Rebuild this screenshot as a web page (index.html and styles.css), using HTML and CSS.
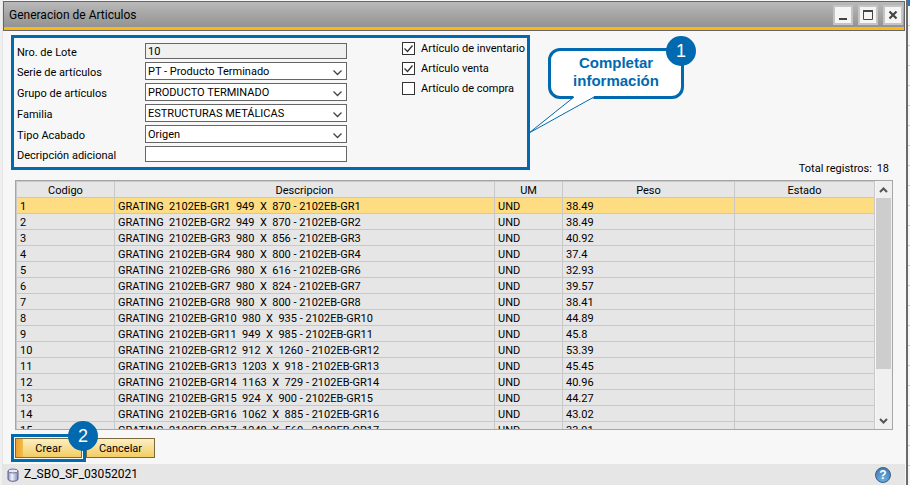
FILE: index.html
```
<!DOCTYPE html>
<html lang="es">
<head>
    <meta charset="UTF-8">
    <meta name="viewport" content="width=device-width, initial-scale=1.0">
    <title>Generacion de Articulos</title>
    <link rel="stylesheet" href="styles.css">
</head>
<body>
    <main class="window">
        <header class="titlebar">
            <h1>Generacion de Articulos</h1>
            <div class="window-buttons">
                <button type="button" aria-label="Minimizar">
                    <svg width="16" height="16" viewBox="0 0 16 16"><path d="M4 12H12" stroke="#444" stroke-width="2"/></svg>
                </button>
                <button type="button" aria-label="Maximizar">
                    <svg width="16" height="16" viewBox="0 0 16 16"><path d="M3.500 3V12.500H12.500V3" fill="none" stroke="#444"/><path d="M3 4H13" stroke="#444" stroke-width="2"/></svg>
                </button>
                <button type="button" aria-label="Cerrar">
                    <svg width="16" height="16" viewBox="0 0 16 16"><path d="M4.500 4.500L11.500 11.500M11.500 4.500L4.500 11.500" stroke="#444" stroke-width="2.200"/></svg>
                </button>
            </div>
        </header>

        <form class="content" onsubmit="event.preventDefault();">
            <section class="top">
                <div class="panel">
                    <div class="fields">
                        <label for="lote">Nro. de Lote</label>
                        <input type="text" id="lote" value="10" readonly>
                        <label for="serie">Serie de artículos</label>
                        <select id="serie"><option>PT - Producto Terminado</option></select>
                        <label for="grupo">Grupo de artículos</label>
                        <select id="grupo"><option>PRODUCTO TERMINADO</option></select>
                        <label for="familia">Familia</label>
                        <select id="familia"><option>ESTRUCTURAS METÁLICAS</option></select>
                        <label for="acabado">Tipo Acabado</label>
                        <select id="acabado"><option>Origen</option></select>
                        <label for="adicional">Decripción adicional</label>
                        <input type="text" id="adicional">
                    </div>
                    <div class="checks">
                        <label><input type="checkbox" checked> Artículo de inventario</label>
                        <label><input type="checkbox" checked> Artículo venta</label>
                        <label><input type="checkbox"> Artículo de compra</label>
                    </div>
                    <div class="callout">
                        Completar<br>información
                        <svg class="tail" width="72" height="42" viewBox="0 0 72 42">
                            <path d="M46 0H66V4L4 37L45 4Z" fill="#fff"/>
                            <path d="M46 3L1 39L66 3" fill="none" stroke="#0069af"/>
                        </svg>
                        <span class="badge">1</span>
                    </div>
                </div>
                <p class="total">Total registros: <span>18</span></p>
            </section>

            <div class="grid">
                <div class="rows">
                    <table>
                        <thead>
                            <tr><th class="codigo">Codigo</th><th>Descripcion</th><th class="um">UM</th><th class="peso">Peso</th><th class="estado">Estado</th></tr>
                        </thead>
                        <tbody>
                            <tr class="selected"><td>1</td><td>GRATING  2102EB-GR1  949  X  870 - 2102EB-GR1</td><td>UND</td><td>38.49</td><td></td></tr>
                            <tr><td>2</td><td>GRATING  2102EB-GR2  949  X  870 - 2102EB-GR2</td><td>UND</td><td>38.49</td><td></td></tr>
                            <tr><td>3</td><td>GRATING  2102EB-GR3  980  X  856 - 2102EB-GR3</td><td>UND</td><td>40.92</td><td></td></tr>
                            <tr><td>4</td><td>GRATING  2102EB-GR4  980  X  800 - 2102EB-GR4</td><td>UND</td><td>37.4</td><td></td></tr>
                            <tr><td>5</td><td>GRATING  2102EB-GR6  980  X  616 - 2102EB-GR6</td><td>UND</td><td>32.93</td><td></td></tr>
                            <tr><td>6</td><td>GRATING  2102EB-GR7  980  X  824 - 2102EB-GR7</td><td>UND</td><td>39.57</td><td></td></tr>
                            <tr><td>7</td><td>GRATING  2102EB-GR8  980  X  800 - 2102EB-GR8</td><td>UND</td><td>38.41</td><td></td></tr>
                            <tr><td>8</td><td>GRATING  2102EB-GR10  980  X  935 - 2102EB-GR10</td><td>UND</td><td>44.89</td><td></td></tr>
                            <tr><td>9</td><td>GRATING  2102EB-GR11  949  X  985 - 2102EB-GR11</td><td>UND</td><td>45.8</td><td></td></tr>
                            <tr><td>10</td><td>GRATING  2102EB-GR12  912  X  1260 - 2102EB-GR12</td><td>UND</td><td>53.39</td><td></td></tr>
                            <tr><td>11</td><td>GRATING  2102EB-GR13  1203  X  918 - 2102EB-GR13</td><td>UND</td><td>45.45</td><td></td></tr>
                            <tr><td>12</td><td>GRATING  2102EB-GR14  1163  X  729 - 2102EB-GR14</td><td>UND</td><td>40.96</td><td></td></tr>
                            <tr><td>13</td><td>GRATING  2102EB-GR15  924  X  900 - 2102EB-GR15</td><td>UND</td><td>44.27</td><td></td></tr>
                            <tr><td>14</td><td>GRATING  2102EB-GR16  1062  X  885 - 2102EB-GR16</td><td>UND</td><td>43.02</td><td></td></tr>
                            <tr><td>15</td><td>GRATING  2102EB-GR17  1240  X  560 - 2102EB-GR17</td><td>UND</td><td>33.91</td><td></td></tr>
                        </tbody>
                    </table>
                </div>
                <div class="scrollbar">
                    <svg width="15" height="17" viewBox="0 0 15 17"><path d="M4 11L7.500 7.500L11 11" fill="none" stroke="#555" stroke-width="2"/></svg>
                    <div class="thumb"></div>
                    <svg width="15" height="16" viewBox="0 0 15 16"><path d="M4 6L7.500 9.500L11 6" fill="none" stroke="#555" stroke-width="2"/></svg>
                </div>
            </div>

            <div class="actions">
                <div class="highlight">
                    <button type="submit" class="primary">Crear</button>
                    <span class="badge">2</span>
                </div>
                <button type="button">Cancelar</button>
            </div>
        </form>

        <footer class="statusbar">
            <svg width="12" height="14" viewBox="0 0 12 14">
                <defs><linearGradient id="db"><stop offset="0" stop-color="#8a8fc8"/><stop offset="0.400" stop-color="#f2f4ff"/><stop offset="1" stop-color="#7f84bd"/></linearGradient></defs>
                <path d="M1 3V11C1 14 11 14 11 11V3Z" fill="url(#db)" stroke="#5c5f80"/>
                <ellipse cx="6" cy="3" rx="5" ry="2" fill="#e4e6fa" stroke="#6d7090"/>
            </svg>
            <span>Z_SBO_SF_03052021</span>
            <button type="button" class="help" aria-label="Ayuda">?</button>
        </footer>
    </main>

    <!-- Window that shows behind this one -->
    <aside class="behind"></aside>
</body>
</html>
```
FILE: styles.css
```
* {
    margin: 0;
    padding: 0;
    box-sizing: border-box;
}

body {
    font-family: Tahoma, Roboto, sans-serif;
    font-size: 11px;
    line-height: 15px;
    color: #000;
    height: 100vh;
    display: flex;
    overflow: hidden;
    background: #f0f0f0;
}

button, input, select {
    font: inherit;
    color: inherit;
}

/* Window */
.window {
    flex: 1;
    display: flex;
    flex-direction: column;
    min-width: 0;
    margin-left: 2px;
    padding: 1px 1px 0 0;
    background: #f7f7f7;
    border-left: 1px solid #e4e4e4;
    border-right: 2px solid #6b6b6b;
}

.titlebar {
    display: flex;
    justify-content: space-between;
    align-items: center;
    height: 30px;
    padding: 0 1px 0 5px;
    border: 1px solid #666;
    background: linear-gradient(to bottom, #fcb813, #fcb813) no-repeat bottom / 100% 3px,
        linear-gradient(to bottom, #b9b9b9, #8e8e8e);
}

.titlebar h1 {
    font-size: 12px;
    font-weight: normal;
    padding-bottom: 2px;
}

.window-buttons {
    display: flex;
    gap: 5px;
    padding-bottom: 2px;
}

.window-buttons button {
    width: 20px;
    height: 20px;
    border: 2px solid #c4c4c4;
    background: #f5f5f5;
}

svg {
    display: block;
}

/* Form */
.content {
    flex: 1;
    display: flex;
    flex-direction: column;
    min-height: 0;
    padding: 4px 12px 2px 8px;
}

.top {
    display: flex;
    justify-content: space-between;
    align-items: flex-end;
    padding-bottom: 4px;
}

.panel {
    position: relative;
    display: flex;
    gap: 55px;
    width: 519px;
    height: 135px;
    margin-bottom: 6px;
    padding: 3px;
    border: 3px solid #0069af;
}

.fields {
    display: grid;
    grid-template-columns: 128px 202px;
    grid-auto-rows: 16px 18px 18px 18px 18px 16px;
    row-gap: 3px;
    align-items: center;
    padding-top: 2px;
}

.fields label {
    padding-top: 2px;
}

.fields input,
.fields select {
    width: 100%;
    height: 100%;
    padding: 0 2px;
    border: 1px solid #666;
    border-radius: 0;
    background: #fff;
}

.fields input[readonly] {
    background: #f0f0f0;
}

.fields select {
    appearance: none;
    background: #fff url("data:image/svg+xml,%3Csvg xmlns='http://www.w3.org/2000/svg' width='9' height='6'%3E%3Cpath d='M.5 .5L4.500 4.500L8.500 .5' fill='none' stroke='%23444' stroke-width='1.300'/%3E%3C/svg%3E") no-repeat right 4px top 7px;
}

.checks {
    display: flex;
    flex-direction: column;
    gap: 5px;
}

.checks label {
    display: flex;
    align-items: center;
    gap: 6px;
    white-space: nowrap;
}

.checks input {
    appearance: none;
    width: 13px;
    height: 13px;
    border: 1px solid #333;
    background: #fff;
}

.checks input:checked {
    background: #fff url("data:image/svg+xml,%3Csvg xmlns='http://www.w3.org/2000/svg' width='11' height='11'%3E%3Cpath d='M1.500 5.500L4.500 8.500L9.500 2.500' fill='none' stroke='%23333' stroke-width='1.300'/%3E%3C/svg%3E") no-repeat center;
}

/* Callouts */
.callout {
    position: absolute;
    left: 534px;
    top: 10px;
    width: 136px;
    height: 51px;
    padding-top: 3px;
    border: 3px solid #0069af;
    border-radius: 12px;
    background: #fff;
    color: #0069af;
    font: bold 15px/18px 'Liberation Sans', Arial, sans-serif;
    text-align: center;
}

.tail {
    position: absolute;
    left: -23px;
    top: 43px;
}

.badge {
    position: absolute;
    top: -15px;
    right: -15px;
    width: 30px;
    height: 30px;
    border-radius: 50%;
    background: #0069af;
    color: #fff;
    font: 18px/30px 'Liberation Sans', Arial, sans-serif;
    text-align: center;
}

.total {
    padding-right: 4px;
}

.total span {
    margin-left: 2px;
}

/* Grid */
.grid {
    flex: 1;
    display: flex;
    gap: 1px;
    min-height: 0;
    margin-left: 4px;
    border: 1px solid #a6a6a6;
}

.rows {
    flex: 1;
    overflow: hidden;
    border-left: 1px solid #c8c8c8;
}

table {
    width: 100%;
    table-layout: fixed;
    border-collapse: separate;
    border-spacing: 0;
    background: #e6e6e6;
}

th, td {
    height: 16px;
    padding: 2px 3px 0 3px;
    border-right: 1px solid #c8c8c8;
    border-bottom: 1px solid #c8c8c8;
    line-height: 13px;
    white-space: pre;
}

th {
    height: 17px;
    padding-top: 1px;
    border-top: 1px solid #c8c8c8;
    font-weight: normal;
}

.selected {
    background: #fddc82;
}

.codigo {
    width: 98px;
}

.um {
    width: 68px;
}

.peso {
    width: 172px;
}

.estado {
    width: 140px;
}

.scrollbar {
    display: flex;
    flex-direction: column;
    width: 16px;
    padding-right: 1px;
    background: #f0f0f0;
}

.thumb {
    height: 171px;
    margin-bottom: auto;
    background: #cdcdcd;
}

/* Buttons */
.actions {
    display: flex;
    align-items: center;
    padding-top: 4px;
}

.actions button {
    width: 69px;
    height: 20px;
    border: 1px solid #7d6a3a;
    background: linear-gradient(to bottom, #fcefc4, #f3cd62);
}

.highlight {
    position: relative;
    width: 75px;
    padding: 1px;
    border: 3px solid #0069af;
}

.highlight .badge {
    top: -16px;
}

.actions .primary {
    width: 67px;
    background: linear-gradient(to right, #eca22c, #f3bb4c) no-repeat left / 7px 100%,
        linear-gradient(to bottom, #fcefc4, #f3cd62);
}

/* Status bar */
.statusbar {
    display: flex;
    align-items: center;
    gap: 5px;
    height: 21px;
    padding: 0 14px 0 4px;
    background: #e6e6e6;
    font-size: 12px;
}

.help {
    width: 16px;
    height: 16px;
    margin-left: auto;
    border: 1px solid #355d87;
    border-radius: 50%;
    background: radial-gradient(circle at 50% 80%, #6db0e0, #3a73ab);
    color: #fff;
    font: bold 12px/14px 'Liberation Sans', Arial, sans-serif;
}

/* Window behind */
.behind {
    width: 2px;
    border-top: 6px solid #2f75b5;
    background: repeating-linear-gradient(to bottom, #f7f7f7 0, #f7f7f7 19px, #ccc 19px, #ccc 20px);
}
```
